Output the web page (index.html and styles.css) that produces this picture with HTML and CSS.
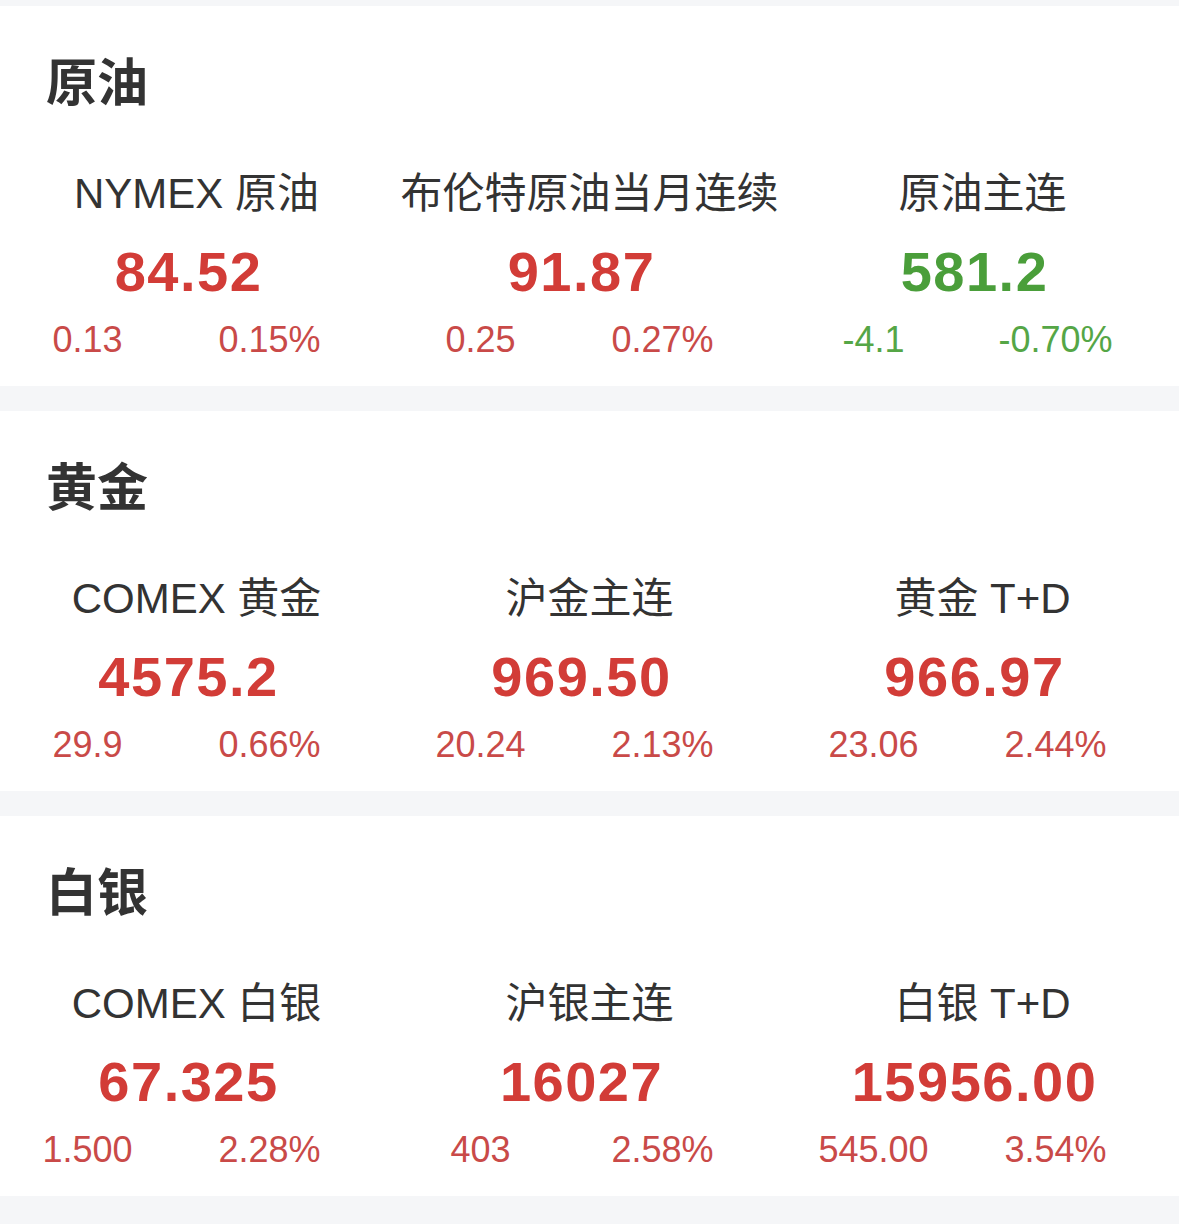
FILE: index.html
```html
<!DOCTYPE html>
<html>
	<head>
		<meta charset="UTF-8">
		<title>行情</title>
		<link rel="stylesheet" href="styles.css">
	</head>
	<body>
		<div id="page">
			<div class="card">
				<h2 class="title">原油</h2>
				<div class="row">
					<div class="item">
						<p class="name">NYMEX 原油</p>
						<p class="price up">84.52</p>
						<p class="chg up"><span>0.13</span><span>0.15%</span></p>
					</div>
					<div class="item">
						<p class="name">布伦特原油当月连续</p>
						<p class="price up">91.87</p>
						<p class="chg up"><span>0.25</span><span>0.27%</span></p>
					</div>
					<div class="item">
						<p class="name">原油主连</p>
						<p class="price down">581.2</p>
						<p class="chg down"><span>-4.1</span><span>-0.70%</span></p>
					</div>
				</div>
			</div>
			<div class="card">
				<h2 class="title">黄金</h2>
				<div class="row">
					<div class="item">
						<p class="name">COMEX 黄金</p>
						<p class="price up">4575.2</p>
						<p class="chg up"><span>29.9</span><span>0.66%</span></p>
					</div>
					<div class="item">
						<p class="name">沪金主连</p>
						<p class="price up">969.50</p>
						<p class="chg up"><span>20.24</span><span>2.13%</span></p>
					</div>
					<div class="item">
						<p class="name">黄金 T+D</p>
						<p class="price up">966.97</p>
						<p class="chg up"><span>23.06</span><span>2.44%</span></p>
					</div>
				</div>
			</div>
			<div class="card">
				<h2 class="title">白银</h2>
				<div class="row">
					<div class="item">
						<p class="name">COMEX 白银</p>
						<p class="price up">67.325</p>
						<p class="chg up"><span>1.500</span><span>2.28%</span></p>
					</div>
					<div class="item">
						<p class="name">沪银主连</p>
						<p class="price up">16027</p>
						<p class="chg up"><span>403</span><span>2.58%</span></p>
					</div>
					<div class="item">
						<p class="name">白银 T+D</p>
						<p class="price up">15956.00</p>
						<p class="chg up"><span>545.00</span><span>3.54%</span></p>
					</div>
				</div>
			</div>
		</div>
	</body>
</html>
```

FILE: styles.css
```css
*{margin: 0;padding: 0;}
body{
	background: #f5f6f8;
	font-family: "Liberation Sans", "Noto Sans CJK SC", sans-serif;
	color: #333;
}
#page{
	width: 1179px;
	padding-top: 6px;
	display: flex;
	flex-direction: column;
	gap: 25px;
}
.card{
	background: #fff;
	height: 380px;
	padding-top: 43px;
	box-sizing: border-box;
}
.title{
	height: 60px;
	line-height: 60px;
	padding-left: 46px;
	font-size: 51px;
	font-weight: 600;
	color: #333;
	font-family: "Noto Sans CJK SC", sans-serif;
}
.row{
	display: grid;
	grid-template-columns: repeat(3, 393px);
	margin-top: 60px;
}
.item{
	display: flex;
	flex-direction: column;
	align-items: center;
}
.name{
	height: 50px;
	line-height: 50px;
	font-size: 42px;
	color: #333;
}
.price{
	height: 60px;
	line-height: 60px;
	margin-top: 23px;
	padding-right: 16px;
	font-size: 56px;
	font-weight: 700;
	letter-spacing: 1.5px;
}
.chg{
	display: grid;
	grid-template-columns: 182px 182px;
	justify-items: center;
	margin-top: 18px;
	margin-left: -36px;
	height: 40px;
	line-height: 40px;
	font-size: 36px;
}
.price.up{color: #d23c37;}
.chg.up{color: #c94a48;}
.price.down{color: #4a9e3a;}
.chg.down{color: #55a646;}
```
